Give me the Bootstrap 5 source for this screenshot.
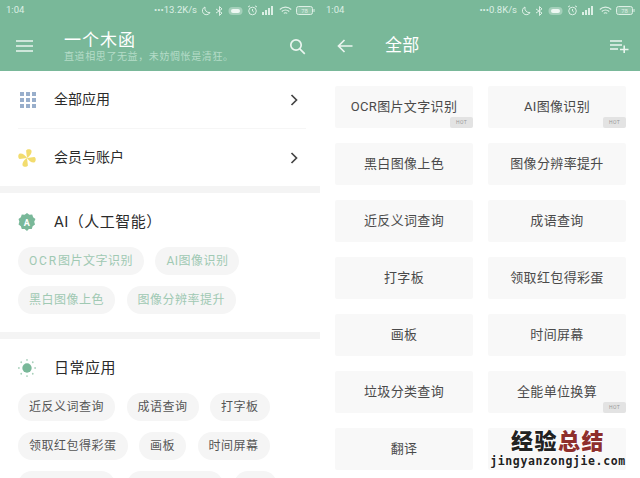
<!DOCTYPE html>
<html lang="zh">
<head>
  <meta charset="UTF-8" />
  <meta name="viewport" content="width=device-width, initial-scale=1.0"/>
  <title>一个木函</title>
  <link href="https://cdn.jsdelivr.net/npm/bootstrap@5.3.3/dist/css/bootstrap.min.css" rel="stylesheet"/>
  <style>
    html, body { width: 640px; height: 478px; overflow: hidden; }
    body { font-family: "Roboto", "Noto Sans CJK SC", sans-serif; background: #fff; color: #333; }
    .phone { width: 320px; height: 478px; overflow: hidden; flex: none; }
    .app-head { height: 71px; background: #79b899; color: #fff; }
    .status-row { height: 21px; padding: 0 5px 0 6px; font-size: 9.5px; color: #dcefe5; }
    .status-row svg { display: block; flex: none; }
    .bat-num { font-size: 6px; font-family: "Roboto", sans-serif; fill: #dcefe5; }
    .tool-row { height: 50px; }
    .menu-btn { width: 64px; padding-left: 16px; }
    .title-box { padding-top: 2px; }
    .app-title { font-size: 17px; line-height: 20px; letter-spacing: 1px; }
    .app-sub { font-size: 10px; line-height: 14px; color: #b5dcc8; letter-spacing: .6px; }
    .tool-search { margin-right: 14px; }
    .tool-add { margin-right: 11px; }
    .back-btn { width: 65px; padding-left: 17px; }
    .page-title { font-size: 17px; letter-spacing: .3px; }
    .entry-row { height: 58px; margin: 0 14px 0 18px; border-bottom: 1px solid #f6f6f6; font-size: 14px; color: #2b2b2b; }
    .entry-row.last { border-bottom: 0; height: 57px; }
    .entry-icon { width: 18px; margin-right: 18px; flex: none; overflow: visible; }
    .gap-bar { height: 7px; background: #f4f4f4; }
    .sec-block { padding: 0 0 18px 18px; }
    .sec-head { height: 54px; padding-top: 4px; font-size: 15px; letter-spacing: .5px; color: #2b2b2b; }
    .pill-row { gap: 11.5px; margin-bottom: 11px; }
    .pill-item { height: 28px; line-height: 28px; padding: 0 11px; border-radius: 14px; background: #f5f5f5; font-size: 12px; letter-spacing: .5px; color: #555; white-space: nowrap; }
    .pill-item.faded { color: #a0c9b3; }
    .wide-latin { letter-spacing: 1.8px; }
    .pill-a { width: 97px; }
    .pill-b { width: 96px; }
    .pill-c { width: 43px; }
    .tile-wrap { padding: 15px 14px 0 15px; display: grid; grid-template-columns: 138px 138px; column-gap: 15px; row-gap: 15px; }
    .tile-item { height: 42px; background: #f8f8f8; border-radius: 2px; position: relative; font-size: 13px; letter-spacing: .35px; color: #4a4a4a; }
    .hot-tag { position: absolute; right: 0; bottom: 0; width: 23px; height: 11px; background: #e3e3e3; border-radius: 2px; color: #999; font-size: 5px; line-height: 11px; text-align: center; }
    .stamp { position: absolute; left: 490px; top: 425px; width: 136px; text-align: center; pointer-events: none; }
    .stamp-cn { font-family: "Noto Sans CJK SC", sans-serif; font-weight: 900; font-size: 22px; line-height: 28px; letter-spacing: 1.5px; color: #222; text-shadow: 0 0 2px #fff, 0 0 2px #fff, 0 0 3px #fff; }
    .stamp-cn em { font-style: normal; color: #8e2f2c; }
    .stamp-en { font-family: "DejaVu Sans Mono", monospace; font-weight: 700; font-size: 11.5px; line-height: 13px; letter-spacing: .6px; margin-top: 2px; color: #222; text-shadow: 0 0 2px #fff, 0 0 2px #fff; white-space: nowrap; }
  </style>
</head>
<body>
  <div class="d-flex position-relative">

    <!-- izquierda: inicio -->
    <div class="phone">
      <div class="app-head">
        <div class="status-row d-flex align-items-center">
          <span>1:04</span>
          <span class="ms-auto">•••13.2K/s</span>
          <svg class="ms-1" width="10" height="10" viewBox="0 0 10 10" fill="none" stroke="#dcefe5"><path d="M4 1a4 4 0 1 0 5 5.5A4.4 4.4 0 0 1 4 1z"/></svg>
          <svg class="ms-1" width="9" height="10" viewBox="0 0 9 10" fill="none" stroke="#dcefe5"><path d="M1 3l6 4-2.5 2.5v-9L7 3 1 7"/></svg>
          <svg class="ms-1" width="15" height="10" viewBox="0 0 15 10"><rect x=".5" y="1" width="14" height="8" rx="4" fill="#a4d0ba"/><rect x="3" y="3" width="9" height="4" rx="2" fill="#eef7f2"/></svg>
          <svg class="ms-1" width="11" height="11" viewBox="0 0 11 11" fill="none" stroke="#dcefe5"><circle cx="5.5" cy="6" r="3.8"/><path d="M1 2l2-1.2M10 2L8 .8M5.5 4v2l1.3 1"/></svg>
          <svg class="ms-1" width="13" height="10" viewBox="0 0 13 10" fill="#dcefe5"><rect x="0" y="6" width="2" height="3"/><rect x="3" y="4" width="2" height="5"/><rect x="6" y="2" width="2" height="7"/><rect x="9" y="0" width="2" height="9"/></svg>
          <svg class="ms-1" width="13" height="10" viewBox="0 0 13 10" fill="none" stroke="#dcefe5" stroke-width="1.1"><path d="M.8 3.5a8 8 0 0 1 11.4 0M2.8 5.5a5.2 5.2 0 0 1 7.4 0M4.8 7.4a2.4 2.4 0 0 1 3.4 0"/></svg>
          <svg class="ms-1" width="19" height="9" viewBox="0 0 19 9" fill="none" stroke="#dcefe5"><rect x=".5" y=".5" width="16" height="8" rx="2" fill="#8fc4a9"/><path d="M18 3v3"/><text class="bat-num" x="8.5" y="6.8" text-anchor="middle" stroke="none">78</text></svg>
        </div>
        <div class="tool-row d-flex align-items-center">
          <div class="menu-btn">
            <svg class="d-block" width="18" height="14" viewBox="0 0 18 14" stroke="#eaf5ef" stroke-width="1.6"><path d="M0 2h17M0 7h17M0 12h17"/></svg>
          </div>
          <div class="title-box">
            <div class="app-title">一个木函</div>
            <div class="app-sub">直道相思了无益，未妨惆怅是清狂。</div>
          </div>
          <svg class="ms-auto tool-search" width="17" height="17" viewBox="0 0 17 17" fill="none" stroke="#eaf5ef" stroke-width="1.7"><circle cx="7" cy="7" r="5.2"/><path d="M10.8 10.8l5 5"/></svg>
        </div>
      </div>

      <div class="entry-row d-flex align-items-center">
        <svg class="entry-icon" width="18" height="16" viewBox="0 0 18 16" fill="#98aecb"><rect x="2" y="0" width="4" height="4"/><rect x="8" y="0" width="4" height="4"/><rect x="14" y="0" width="4" height="4"/><rect x="2" y="6" width="4" height="4"/><rect x="8" y="6" width="4" height="4"/><rect x="14" y="6" width="4" height="4"/><rect x="2" y="12" width="4" height="4"/><rect x="8" y="12" width="4" height="4"/><rect x="14" y="12" width="4" height="4"/></svg>
        <span>全部应用</span>
        <svg class="ms-auto me-2" width="8" height="12" viewBox="0 0 8 12" fill="none" stroke="#444" stroke-width="1.7"><path d="M1.5 1l5 5-5 5"/></svg>
      </div>
      <div class="entry-row last d-flex align-items-center">
        <svg class="entry-icon" width="20" height="20" viewBox="0 0 20 20" fill="#f2dc6e"><path d="M10 10L9 2c0-2 5-2.500 6 0 .5 3-2 6-5 8z"/><path transform="rotate(90 10 10)" d="M10 10L9 2c0-2 5-2.500 6 0 .5 3-2 6-5 8z"/><path transform="rotate(180 10 10)" d="M10 10L9 2c0-2 5-2.500 6 0 .5 3-2 6-5 8z"/><path transform="rotate(270 10 10)" d="M10 10L9 2c0-2 5-2.500 6 0 .5 3-2 6-5 8z"/></svg>
        <span>会员与账户</span>
        <svg class="ms-auto me-2" width="8" height="12" viewBox="0 0 8 12" fill="none" stroke="#444" stroke-width="1.7"><path d="M1.5 1l5 5-5 5"/></svg>
      </div>
      <div class="gap-bar"></div>

      <div class="sec-block">
        <div class="sec-head d-flex align-items-center">
          <svg class="entry-icon" width="20" height="20" viewBox="0 0 20 20"><path d="M10 0l2.6 1.9 3.2-.1 1 3 2.6 1.9L18 9.8l.9 3-2.6 1.9-1 3-3.2 0L10 20l-2.6-2.3-3.2 0-1-3L.6 12.8l.9-3L.6 6.7l2.6-1.9 1-3 3.2.1z" fill="#79b899"/><text x="10" y="14" text-anchor="middle" font-size="10" font-weight="700" fill="#fff" font-family="Roboto">A</text></svg>
          <span>AI（人工智能）</span>
        </div>
        <div class="pill-row d-flex">
          <span class="pill-item faded"><span class="wide-latin">OCR</span>图片文字识别</span>
          <span class="pill-item faded">AI图像识别</span>
        </div>
        <div class="pill-row d-flex mb-0">
          <span class="pill-item faded">黑白图像上色</span>
          <span class="pill-item faded">图像分辨率提升</span>
        </div>
      </div>
      <div class="gap-bar"></div>

      <div class="sec-block">
        <div class="sec-head d-flex align-items-center">
          <svg class="entry-icon" width="20" height="20" viewBox="0 0 20 20" fill="#79b899"><circle cx="10" cy="10" r="5.2"/><g fill="#a9d0bb"><circle cx="10" cy="1" r="1"/><circle cx="10" cy="19" r="1"/><circle cx="1" cy="10" r="1"/><circle cx="19" cy="10" r="1"/><circle cx="3.6" cy="3.6" r="1"/><circle cx="16.4" cy="3.6" r="1"/><circle cx="3.6" cy="16.4" r="1"/><circle cx="16.4" cy="16.4" r="1"/></g></svg>
          <span>日常应用</span>
        </div>
        <div class="pill-row d-flex">
          <span class="pill-item">近反义词查询</span>
          <span class="pill-item">成语查询</span>
          <span class="pill-item">打字板</span>
        </div>
        <div class="pill-row d-flex">
          <span class="pill-item">领取红包得彩蛋</span>
          <span class="pill-item">画板</span>
          <span class="pill-item">时间屏幕</span>
        </div>
        <div class="pill-row d-flex">
          <span class="pill-item pill-a"></span>
          <span class="pill-item pill-b"></span>
          <span class="pill-item pill-c"></span>
        </div>
      </div>
    </div>

    <!-- derecha: todas las apps -->
    <div class="phone">
      <div class="app-head">
        <div class="status-row d-flex align-items-center">
          <span>1:04</span>
          <span class="ms-auto">•••0.8K/s</span>
          <svg class="ms-1" width="10" height="10" viewBox="0 0 10 10" fill="none" stroke="#dcefe5"><path d="M4 1a4 4 0 1 0 5 5.5A4.4 4.4 0 0 1 4 1z"/></svg>
          <svg class="ms-1" width="9" height="10" viewBox="0 0 9 10" fill="none" stroke="#dcefe5"><path d="M1 3l6 4-2.5 2.5v-9L7 3 1 7"/></svg>
          <svg class="ms-1" width="15" height="10" viewBox="0 0 15 10"><rect x=".5" y="1" width="14" height="8" rx="4" fill="#a4d0ba"/><rect x="3" y="3" width="9" height="4" rx="2" fill="#eef7f2"/></svg>
          <svg class="ms-1" width="11" height="11" viewBox="0 0 11 11" fill="none" stroke="#dcefe5"><circle cx="5.5" cy="6" r="3.8"/><path d="M1 2l2-1.2M10 2L8 .8M5.5 4v2l1.3 1"/></svg>
          <svg class="ms-1" width="13" height="10" viewBox="0 0 13 10" fill="#dcefe5"><rect x="0" y="6" width="2" height="3"/><rect x="3" y="4" width="2" height="5"/><rect x="6" y="2" width="2" height="7"/><rect x="9" y="0" width="2" height="9"/></svg>
          <svg class="ms-1" width="13" height="10" viewBox="0 0 13 10" fill="none" stroke="#dcefe5" stroke-width="1.1"><path d="M.8 3.5a8 8 0 0 1 11.4 0M2.8 5.5a5.2 5.2 0 0 1 7.4 0M4.8 7.4a2.4 2.4 0 0 1 3.4 0"/></svg>
          <svg class="ms-1" width="19" height="9" viewBox="0 0 19 9" fill="none" stroke="#dcefe5"><rect x=".5" y=".5" width="16" height="8" rx="2" fill="#8fc4a9"/><path d="M18 3v3"/><text class="bat-num" x="8.5" y="6.8" text-anchor="middle" stroke="none">78</text></svg>
        </div>
        <div class="tool-row d-flex align-items-center">
          <div class="back-btn">
            <svg class="d-block" width="16" height="14" viewBox="0 0 16 14" fill="none" stroke="#eaf5ef" stroke-width="1.7"><path d="M15.5 7H1.5M7.5 1l-6 6 6 6"/></svg>
          </div>
          <div class="page-title">全部</div>
          <svg class="ms-auto tool-add" width="19" height="14" viewBox="0 0 19 14" fill="none" stroke="#eaf5ef" stroke-width="1.6"><path d="M0 2h12M0 6h12M0 10h8M10 10.500h8.500M14.200 6.500v7.500"/></svg>
        </div>
      </div>

      <div class="tile-wrap">
        <div class="tile-item d-flex align-items-center justify-content-center">OCR图片文字识别<span class="hot-tag">HOT</span></div>
        <div class="tile-item d-flex align-items-center justify-content-center">AI图像识别<span class="hot-tag">HOT</span></div>
        <div class="tile-item d-flex align-items-center justify-content-center">黑白图像上色</div>
        <div class="tile-item d-flex align-items-center justify-content-center">图像分辨率提升</div>
        <div class="tile-item d-flex align-items-center justify-content-center">近反义词查询</div>
        <div class="tile-item d-flex align-items-center justify-content-center">成语查询</div>
        <div class="tile-item d-flex align-items-center justify-content-center">打字板</div>
        <div class="tile-item d-flex align-items-center justify-content-center">领取红包得彩蛋</div>
        <div class="tile-item d-flex align-items-center justify-content-center">画板</div>
        <div class="tile-item d-flex align-items-center justify-content-center">时间屏幕</div>
        <div class="tile-item d-flex align-items-center justify-content-center">垃圾分类查询</div>
        <div class="tile-item d-flex align-items-center justify-content-center">全能单位换算<span class="hot-tag">HOT</span></div>
        <div class="tile-item d-flex align-items-center justify-content-center">翻译</div>
        <div class="tile-item"></div>
      </div>
    </div>

    <!-- marca de agua -->
    <div class="stamp">
      <div class="stamp-cn">经验<em>总结</em></div>
      <div class="stamp-en">jingyanzongjie.com</div>
    </div>
  </div>

  <script src="https://cdn.jsdelivr.net/npm/bootstrap@5.3.3/dist/js/bootstrap.bundle.min.js"></script>
</body>
</html>
